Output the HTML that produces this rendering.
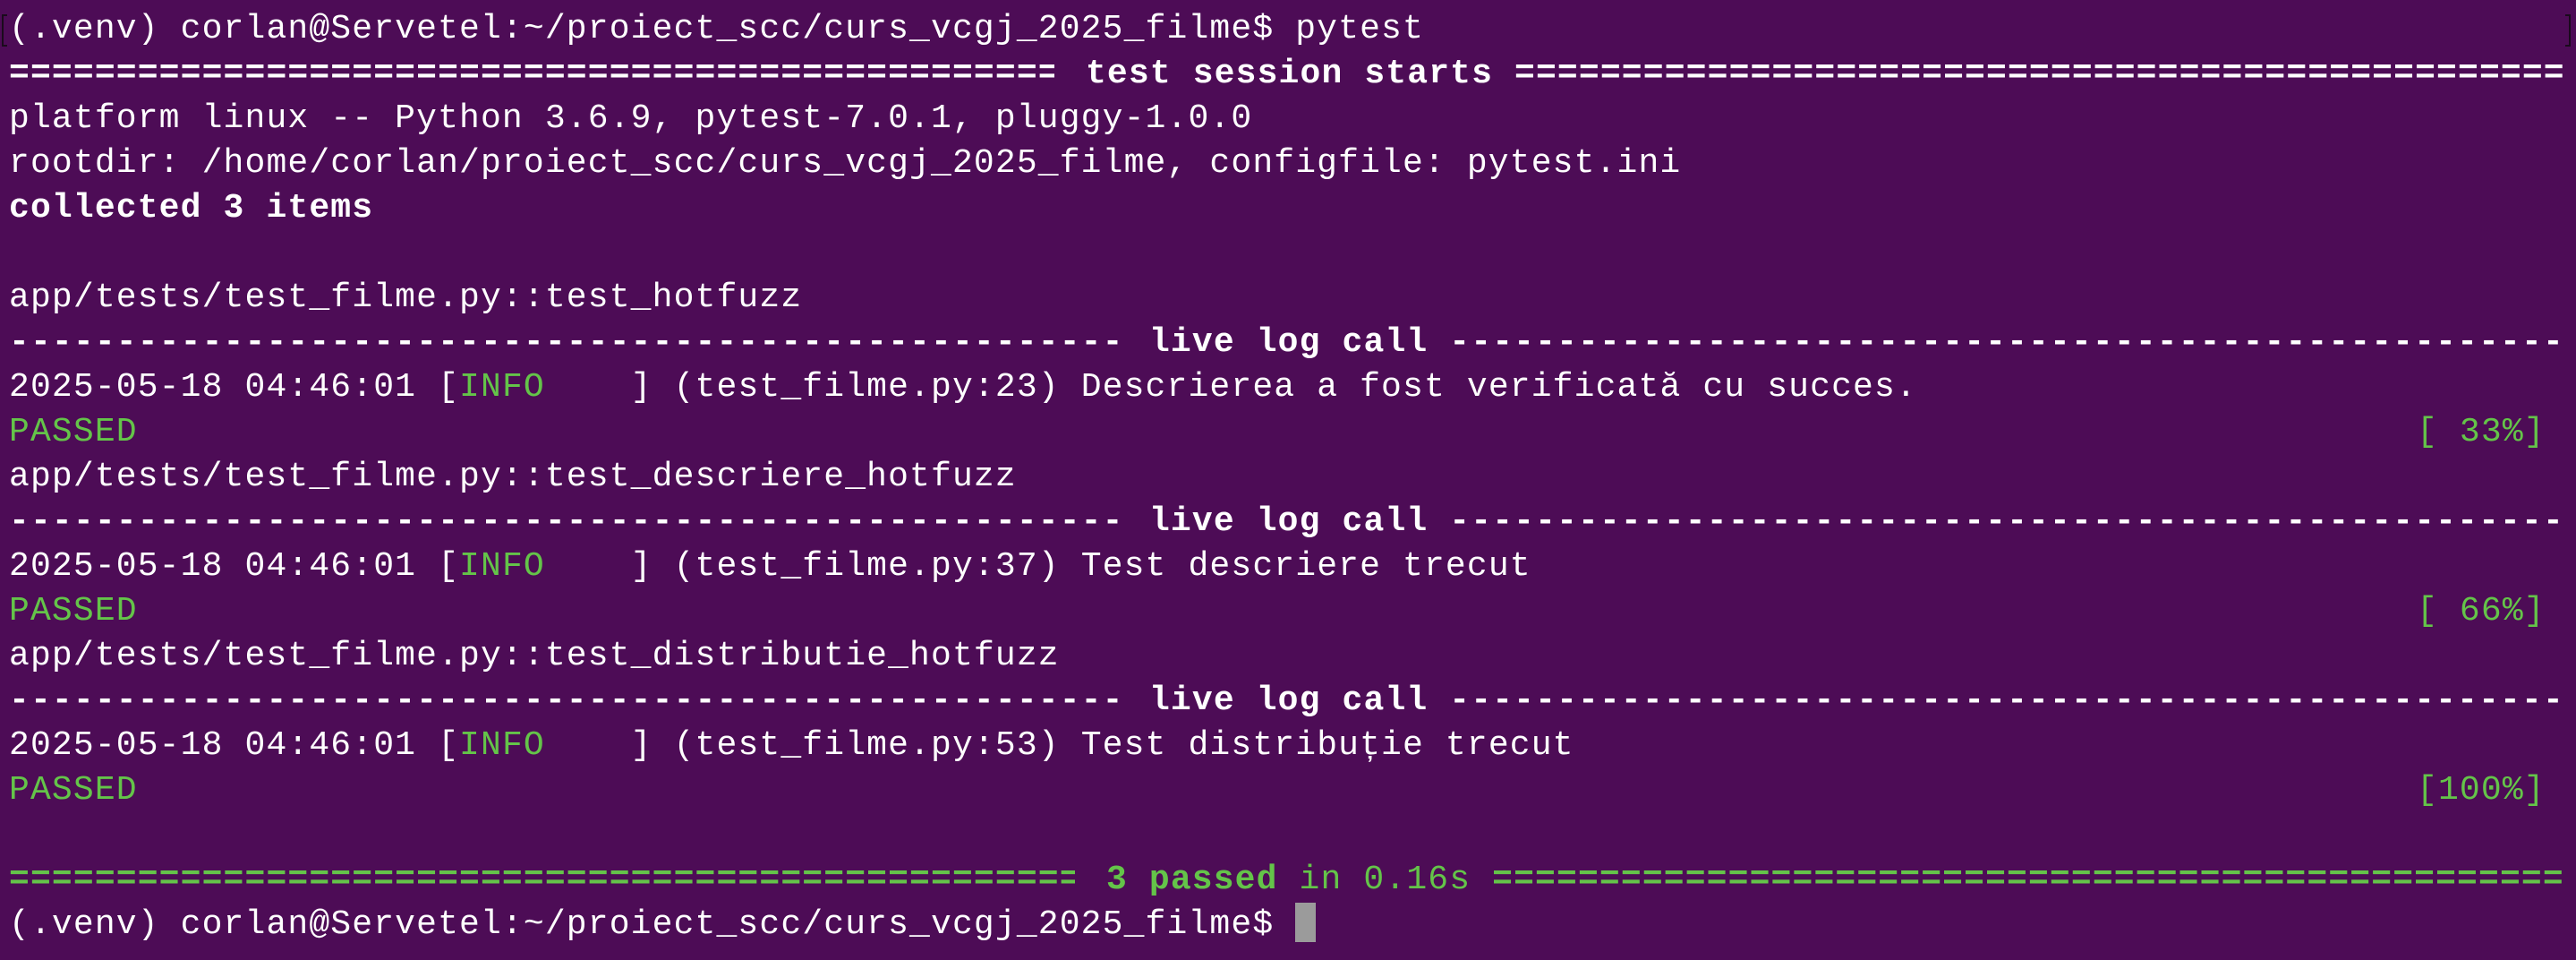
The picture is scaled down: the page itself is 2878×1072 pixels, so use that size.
<!DOCTYPE html>
<html><head><meta charset="utf-8"><style>
html,body{margin:0;padding:0;background:#4d0c56;width:2878px;height:1072px;overflow:hidden}
#t{position:absolute;left:10px;top:8px;font-family:"Liberation Mono",monospace;font-size:38px;letter-spacing:1.15px;line-height:50px;color:#fff}
#t div{height:50px;position:relative;white-space:pre}
#t div.s{width:2856px;overflow:hidden}
.f{display:inline-block;overflow:hidden;vertical-align:top;height:50px}
.b{font-weight:bold}.g{color:#64c449}
.r{position:absolute;left:2690px;top:0}
.cur{display:inline-block;width:23px;height:44px;background:#9b9b9b;vertical-align:-10px}
.lb{position:absolute;left:2px;top:16px;width:4px;height:32px;border:2px solid #1a0a1c;border-right:none}
.rb{position:absolute;left:2866px;top:16px;width:4px;height:32px;border:2px solid #1a0a1c;border-left:none}
</style></head><body>
<div class="lb"></div><div class="rb"></div>
<div id="t"><div>(.venv) corlan@Servetel:~/proiect_scc/curs_vcgj_2025_filme$ pytest</div><div class="s b"><span class="f" style="width:1168px;margin-right:11px">============================================================</span> test session starts ==================================================================</div><div>platform linux -- Python 3.6.9, pytest-7.0.1, pluggy-1.0.0</div><div>rootdir: /home/corlan/proiect_scc/curs_vcgj_2025_filme, configfile: pytest.ini</div><div class="b">collected 3 items</div><div> </div><div>app/tests/test_filme.py::test_hotfuzz</div><div class="s b"><span class="f" style="width:1250px">------------------------------------------------------------</span> live log call ------------------------------------------------------------------</div><div>2025-05-18 04:46:01 [<span class="g">INFO    </span>] (test_filme.py:23) Descrierea a fost verificată cu succes.</div><div class="g">PASSED<span class="r">[ 33%]</span></div><div>app/tests/test_filme.py::test_descriere_hotfuzz</div><div class="s b"><span class="f" style="width:1250px">------------------------------------------------------------</span> live log call ------------------------------------------------------------------</div><div>2025-05-18 04:46:01 [<span class="g">INFO    </span>] (test_filme.py:37) Test descriere trecut</div><div class="g">PASSED<span class="r">[ 66%]</span></div><div>app/tests/test_filme.py::test_distributie_hotfuzz</div><div class="s b"><span class="f" style="width:1250px">------------------------------------------------------------</span> live log call ------------------------------------------------------------------</div><div>2025-05-18 04:46:01 [<span class="g">INFO    </span>] (test_filme.py:53) Test distribuție trecut</div><div class="g">PASSED<span class="r">[100%]</span></div><div> </div><div class="s g b"><span class="f" style="width:1191px;margin-right:11px">============================================================</span> 3 passed<span style="font-weight:normal"> in 0.16s </span>==================================================================</div><div>(.venv) corlan@Servetel:~/proiect_scc/curs_vcgj_2025_filme$ <span class="cur"></span></div></div>
</body></html>
